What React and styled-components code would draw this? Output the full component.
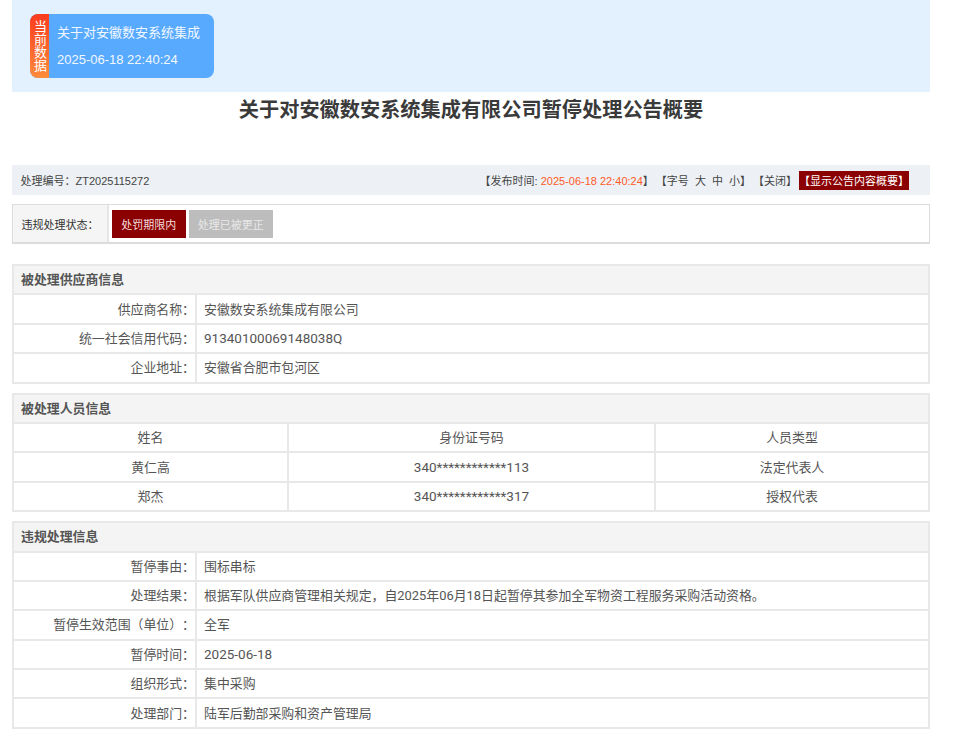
import styled, { createGlobalStyle } from 'styled-components';

const GlobalStyle = createGlobalStyle`
    html, body {
        margin: 0;
        padding: 0;
        background: #fff;
    }
    body {
        font-family: Roboto, "Noto Sans CJK SC", sans-serif;
        color: #555;
        text-spacing-trim: space-all;
    }
`;

const Page = styled.div`
    width: 918px;
    margin-left: 12px;
    height: 746px;
    overflow: hidden;
`;

const Banner = styled.div`
    height: 92px;
    padding: 14px 18px 0;
    box-sizing: border-box;
    background: #e3f0fd;
`;

const DataCard = styled.div`
    width: 184px;
    height: 64px;
    display: flex;
    border-radius: 8px;
    overflow: hidden;
    background: #58aaff;
`;

const CardTag = styled.div`
    width: 19px;
    display: flex;
    align-items: center;
    justify-content: center;
    background: linear-gradient(180deg, #fb3a1c, #fd8c3c);
    color: #fff;
    font-size: 13px;
    line-height: 19px;
    writing-mode: vertical-rl;
    text-orientation: upright;
`;

const CardBody = styled.div`
    flex: 1;
    padding: 10px 0 0 8px;
    color: #f2f8ff;
    font-family: "Liberation Sans", "Noto Sans CJK SC", sans-serif;
    font-size: 13px;
    line-height: 17px;
    display: flex;
    flex-direction: column;
    gap: 10px;
`;

const Title = styled.h1`
    margin: 0;
    height: 73px;
    padding-top: 4px;
    box-sizing: border-box;
    text-align: center;
    font-size: 20.2px;
    line-height: 28px;
    font-weight: 700;
    color: #3a3a3a;
`;

const MetaBar = styled.div`
    height: 30px;
    display: flex;
    align-items: center;
    justify-content: space-between;
    padding: 0 21px 0 8.5px;
    background: #edf1f5;
    font-family: "Liberation Sans", "Noto Sans CJK SC", sans-serif;
    font-size: 11px;
    color: #444;
`;

const MetaLinks = styled.div`
    display: flex;
    align-items: center;
`;

const Stamp = styled.span`
    color: #ff5a26;
`;

const FontSizes = styled.span`
    word-spacing: 3px;
    margin: 0 2px;
`;

const SummaryButton = styled.span`
    height: 19px;
    margin-left: 2px;
    display: flex;
    align-items: center;
    background: #8b0000;
    color: #fff;
`;

const StatusBox = styled.div`
    margin-top: 9px;
    height: 40px;
    display: flex;
    box-sizing: border-box;
    border: 1px solid #dcdcdc;
    border-width: 1px 1px 2px 1px;
`;

const StatusLabel = styled.div`
    width: 96px;
    display: flex;
    align-items: center;
    padding-left: 8.5px;
    box-sizing: border-box;
    background: #f5f5f5;
    border-right: 2px solid #e6e6e6;
    font-size: 11px;
    color: #333;
`;

const StatusList = styled.div`
    display: flex;
    align-items: center;
    gap: 3px;
    padding-left: 3px;
`;

const StatusChip = styled.span`
    height: 28px;
    padding: 0 9.25px;
    display: flex;
    align-items: center;
    font-size: 11px;
    color: ${(p) => (p.$active ? '#f5dede' : '#e8e8e8')};
    background: ${(p) => (p.$active ? '#8b0000' : '#bdbdbd')};
`;

const Section = styled.table`
    width: 100%;
    table-layout: fixed;
    border-collapse: collapse;
    margin-top: ${(p) => p.$top}px;
    font-size: 12.9px;
    background: #fff;

    td, th {
        border: 2px solid #e8e8e8;
        height: 29.4px;
        padding: 1px 0 0;
        box-sizing: border-box;
        font-weight: 400;
        line-height: 16px;
    }
`;

const SectionHead = styled.th`
    && {
        text-align: left;
        padding-left: 7px;
        background: #f4f4f4;
        font-weight: 700;
        font-size: 12.9px;
        color: #555;
    }
`;

const KeyCell = styled.td`
    text-align: right;
`;

const ValueCell = styled.td`
    && {
        padding-left: 7px;
    }
`;

const CenterCell = styled.td`
    text-align: center;
`;

const Num = styled.span`
    font-size: 13.5px;
`;

const supplierRows = [
    ['供应商名称：', '安徽数安系统集成有限公司'],
    ['统一社会信用代码：', <Num>91340100069148038Q</Num>],
    ['企业地址：', '安徽省合肥市包河区'],
];

const people = [
    ['姓名', '身份证号码', '人员类型'],
    ['黄仁高', <Num>340************113</Num>, '法定代表人'],
    ['郑杰', <Num>340************317</Num>, '授权代表'],
];

const violationRows = [
    ['暂停事由：', '围标串标'],
    ['处理结果：', '根据军队供应商管理相关规定，自2025年06月18日起暂停其参加全军物资工程服务采购活动资格。'],
    ['暂停生效范围（单位）：', '全军'],
    ['暂停时间：', <Num>2025-06-18</Num>],
    ['组织形式：', '集中采购'],
    ['处理部门：', '陆军后勤部采购和资产管理局'],
];

const KeyValueSection = ({ title, rows, top }) => (
    <Section $top={top}>
        <colgroup>
            <col style={{ width: 183 }} />
            <col />
        </colgroup>
        <tbody>
            <tr>
                <SectionHead colSpan={2}>{title}</SectionHead>
            </tr>
            {rows.map(([key, value]) => (
                <tr key={key}>
                    <KeyCell>{key}</KeyCell>
                    <ValueCell>{value}</ValueCell>
                </tr>
            ))}
        </tbody>
    </Section>
);

const App = () => (
    <Page>
        <GlobalStyle />
        <Banner>
            <DataCard>
                <CardTag>当前数据</CardTag>
                <CardBody>
                    <span>关于对安徽数安系统集成</span>
                    <span>2025-06-18 22:40:24</span>
                </CardBody>
            </DataCard>
        </Banner>
        <Title>关于对安徽数安系统集成有限公司暂停处理公告概要</Title>
        <MetaBar>
            <span>处理编号：ZT2025115272</span>
            <MetaLinks>
                <span>【发布时间: <Stamp>2025-06-18 22:40:24</Stamp>】</span>
                <FontSizes>【字号 大 中 小】</FontSizes>
                <span>【关闭】</span>
                <SummaryButton>【显示公告内容概要】</SummaryButton>
            </MetaLinks>
        </MetaBar>
        <StatusBox>
            <StatusLabel>违规处理状态：</StatusLabel>
            <StatusList>
                <StatusChip $active>处罚期限内</StatusChip>
                <StatusChip>处理已被更正</StatusChip>
            </StatusList>
        </StatusBox>
        <KeyValueSection title="被处理供应商信息" rows={supplierRows} top={20} />
        <Section $top={9}>
            <colgroup>
                <col style={{ width: 275 }} />
                <col style={{ width: 367 }} />
                <col />
            </colgroup>
            <tbody>
                <tr>
                    <SectionHead colSpan={3}>被处理人员信息</SectionHead>
                </tr>
                {people.map((row, i) => (
                    <tr key={i}>
                        {row.map((cell, j) => (
                            <CenterCell key={j}>{cell}</CenterCell>
                        ))}
                    </tr>
                ))}
            </tbody>
        </Section>
        <KeyValueSection title="违规处理信息" rows={violationRows} top={9} />
    </Page>
);

export default App;
